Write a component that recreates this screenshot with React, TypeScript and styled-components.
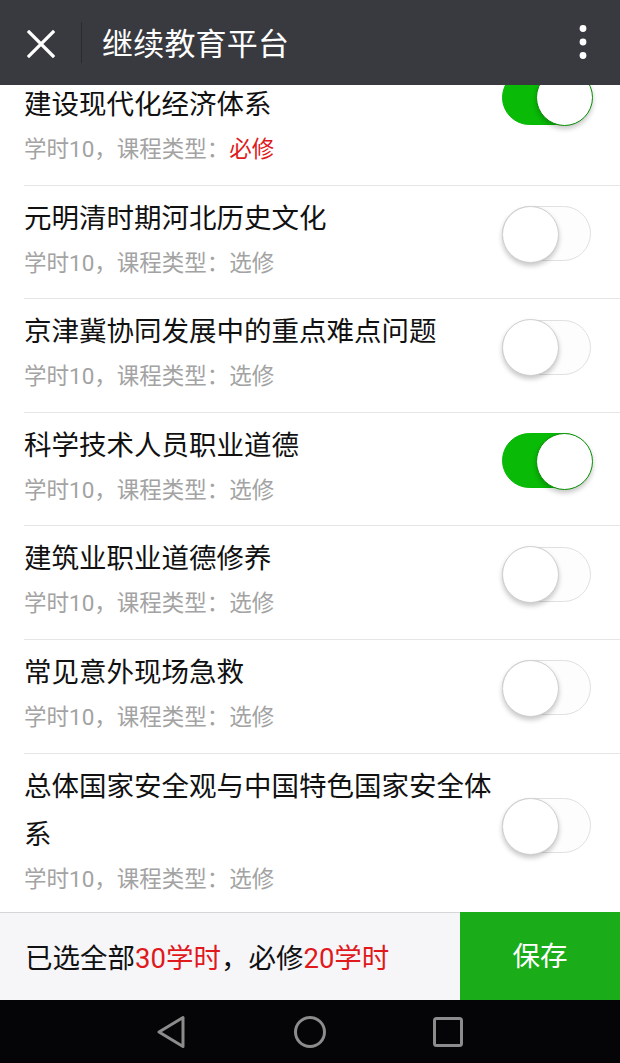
import React from "react";
import styled, { createGlobalStyle } from "styled-components";

const GlobalStyle = createGlobalStyle`
  html, body { margin: 0; padding: 0; background: #ffffff; }
  body { font-family: Roboto, "Noto Sans CJK SC", "Noto Sans", sans-serif; -webkit-font-smoothing: antialiased; }
  * { box-sizing: border-box; }
`;

const Page = styled.div`
  width: 620px;
  height: 1063px;
  display: flex;
  flex-direction: column;
  overflow: hidden;
  background: #fff;
`;

const Header = styled.header`
  position: relative;
  z-index: 2;
  flex: none;
  height: 85px;
  background: #393a3f;
  display: flex;
  align-items: center;
`;

const CloseButton = styled.div`
  width: 81px;
  height: 100%;
  display: flex;
  align-items: center;
  justify-content: center;
  padding-top: 2px;
`;

const Divider = styled.div`
  width: 1px;
  height: 41px;
  background: #2a2b2f;
`;

const Title = styled.h1`
  flex: 1;
  margin: 0 0 0 20px;
  font-size: 31px;
  font-weight: 400;
  color: #ffffff;
  letter-spacing: 0.2px;
  padding-bottom: 2px;
`;

const MoreButton = styled.div`
  width: 74px;
  height: 100%;
  display: flex;
  align-items: center;
  justify-content: center;
  padding-bottom: 1px;
`;

const ListArea = styled.div`
  flex: 1;
  min-height: 0;
  overflow: hidden;
`;

const List = styled.ul`
  list-style: none;
  margin: -13px 0 0;
  padding: 0;
`;

const Row = styled.li`
  position: relative;
  display: flex;
  align-items: center;
  gap: 4px;
  padding: 9px 28px 20.6px 24px;
  & + &::before {
    content: "";
    position: absolute;
    top: 0;
    left: 24px;
    right: 0;
    height: 1px;
    background: #e5e5e5;
  }
  & + & {
    padding-top: 10px;
  }
`;

const RowText = styled.div`
  flex: 1;
  min-width: 0;
`;

const CourseName = styled.div`
  font-size: 27.5px;
  line-height: 48px;
  color: #111111;
`;

const Meta = styled.div`
  margin-top: 5px;
  font-size: 22.5px;
  line-height: 30px;
  color: #a3a3a3;
`;

const Required = styled.span`
  color: #e0191c;
`;

const Switch = styled.div<{ $on: boolean; $lift?: number }>`
  position: relative;
  flex: none;
  width: 89px;
  height: 55px;
  border-radius: 28px;
  margin-bottom: 5px;
  margin-right: 1px;
  border: 1.5px solid ${(p) => (p.$on ? "#05b803" : "#e0e0e0")};
  background: ${(p) => (p.$on ? "#09bb07" : "#fdfdfd")};
  transform: translateY(${(p) => -(p.$lift ?? 0)}px);
  &::after {
    content: "";
    position: absolute;
    top: -1.5px;
    left: ${(p) => (p.$on ? "32.5px" : "-1.5px")};
    width: 55px;
    height: 55px;
    border-radius: 50%;
    background: #ffffff;
    border: 1.5px solid ${(p) => (p.$on ? "#078f05" : "#cfcfcf")};
    box-shadow: 0 3px 5px rgba(0, 0, 0, 0.22);
  }
`;

const BottomBar = styled.footer`
  position: relative;
  z-index: 2;
  flex: none;
  height: 88px;
  display: flex;
`;

const Summary = styled.div`
  flex: 1;
  display: flex;
  align-items: center;
  padding-left: 25px;
  padding-bottom: 2px;
  background: #f6f6f9;
  border-top: 1.5px solid #d6d6d8;
  font-size: 27.5px;
  color: #111111;
`;

const Hours = styled.span`
  color: #e0191c;
`;

const SaveButton = styled.button`
  width: 160px;
  border: none;
  background: #1aad19;
  color: #ffffff;
  font-family: inherit;
  font-size: 27.5px;
  padding: 0 0 4px;
  cursor: pointer;
`;

const NavBar = styled.nav`
  flex: none;
  height: 63px;
  background: #050507;
  display: grid;
  grid-template-columns: repeat(3, 138px);
  justify-content: center;
  align-items: center;
`;

const NavSlot = styled.div`
  display: flex;
  justify-content: center;
  align-items: center;
`;

type Course = { name: string; required: boolean; on: boolean; lift?: number };

const courses: Course[] = [
  { name: "建设现代化经济体系", required: true, on: true, lift: 23 },
  { name: "元明清时期河北历史文化", required: false, on: false },
  { name: "京津冀协同发展中的重点难点问题", required: false, on: false },
  { name: "科学技术人员职业道德", required: false, on: true },
  { name: "建筑业职业道德修养", required: false, on: false },
  { name: "常见意外现场急救", required: false, on: false },
  { name: "总体国家安全观与中国特色国家安全体系", required: false, on: false },
];

export default function App() {
  return (
    <Page>
      <GlobalStyle />
      <Header>
        <CloseButton>
          <svg width="28" height="28" viewBox="0 0 28 28">
            <path d="M2 2 L26 26 M26 2 L2 26" stroke="#ffffff" strokeWidth="3.2" strokeLinecap="square" />
          </svg>
        </CloseButton>
        <Divider />
        <Title>继续教育平台</Title>
        <MoreButton>
          <svg width="10" height="36" viewBox="0 0 10 36">
            <circle cx="5" cy="4.5" r="3.4" fill="#ffffff" />
            <circle cx="5" cy="18" r="3.4" fill="#ffffff" />
            <circle cx="5" cy="31.5" r="3.4" fill="#ffffff" />
          </svg>
        </MoreButton>
      </Header>
      <ListArea>
        <List>
          {courses.map((c) => (
            <Row key={c.name}>
              <RowText>
                <CourseName>{c.name}</CourseName>
                <Meta>
                  学时10，课程类型：{c.required ? <Required>必修</Required> : "选修"}
                </Meta>
              </RowText>
              <Switch $on={c.on} $lift={c.lift} />
            </Row>
          ))}
        </List>
      </ListArea>
      <BottomBar>
        <Summary>
          已选全部<Hours>30学时</Hours>，必修<Hours>20学时</Hours>
        </Summary>
        <SaveButton>保存</SaveButton>
      </BottomBar>
      <NavBar>
        <NavSlot>
          <svg width="32" height="34" viewBox="0 0 32 34">
            <path d="M27 2.5 L27 31.5 L3 17 Z" fill="none" stroke="#8c8c8c" strokeWidth="3" strokeLinejoin="round" />
          </svg>
        </NavSlot>
        <NavSlot>
          <svg width="34" height="34" viewBox="0 0 34 34">
            <circle cx="17" cy="17" r="14.5" fill="none" stroke="#8c8c8c" strokeWidth="3" />
          </svg>
        </NavSlot>
        <NavSlot>
          <svg width="32" height="32" viewBox="0 0 32 32">
            <rect x="2.5" y="2.5" width="27" height="27" rx="2" fill="none" stroke="#8c8c8c" strokeWidth="3" />
          </svg>
        </NavSlot>
      </NavBar>
    </Page>
  );
}
